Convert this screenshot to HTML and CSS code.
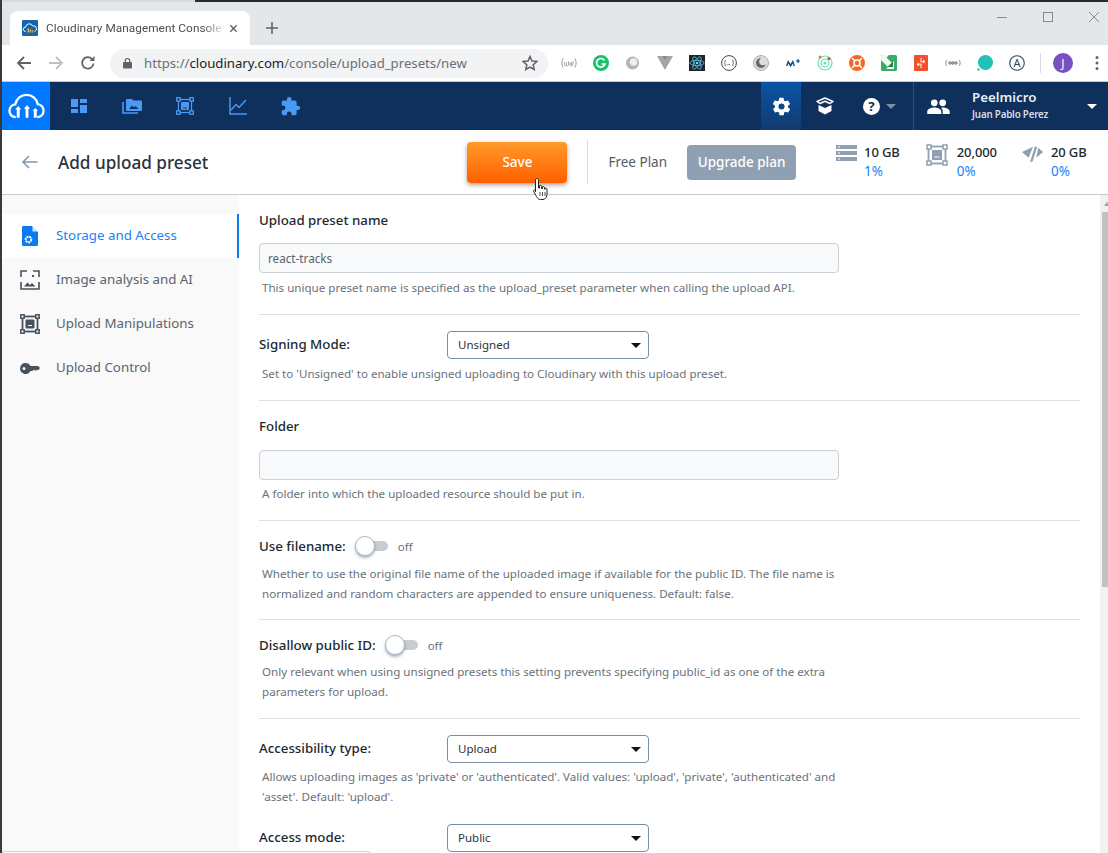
FILE: index.html
```html
<!DOCTYPE html>
<html lang="en">
<head>
<meta charset="utf-8">
<title>Cloudinary Management Console</title>
<link rel="stylesheet" href="styles.css">
</head>
<body>
<div class="window">
  <div class="topline"></div>
  <div class="tabstrip">
    <div class="tab">
      <svg class="favicon" viewBox="0 0 16 16"><rect width="16" height="16" rx="1" fill="#1565a8"/><path d="M3.500 11.500a2.200 2.200 0 0 1 .2-4.400A3.600 3.600 0 0 1 10.600 6a2.800 2.800 0 0 1 2 5.500" fill="none" stroke="#fff" stroke-width="1"/><rect x="5.500" y="8.500" width="1.500" height="4" fill="#f5b342"/><rect x="7.700" y="9.500" width="1.500" height="3" fill="#f5b342"/><rect x="9.900" y="10" width="1.500" height="2.500" fill="#f08a24"/></svg>
      <span class="tab-title">Cloudinary Management Console</span>
      <svg class="tab-close" viewBox="0 0 10 10"><path d="M1.500 1.500l7 7M8.500 1.500l-7 7" stroke="#5f6368" stroke-width="1.500"/></svg>
    </div>
    <svg class="new-tab" viewBox="0 0 12 12"><path d="M6 0v12M0 6h12" stroke="#5f6368" stroke-width="1.600"/></svg>
    <div class="win-controls">
      <svg viewBox="0 0 10 10"><path d="M0 5.500h10" stroke="#8a8d90"/></svg>
      <svg viewBox="0 0 10 10"><rect x=".5" y=".5" width="9" height="9" fill="none" stroke="#8a8d90"/></svg>
      <svg viewBox="0 0 10 10"><path d="M0 0l10 10M10 0L0 10" stroke="#8a8d90"/></svg>
    </div>
  </div>

  <div class="toolbar">
    <svg class="nav-btn" viewBox="0 0 16 16"><path d="M15 8H2.500M8 2L2 8l6 6" fill="none" stroke="#5f6368" stroke-width="1.800"/></svg>
    <svg class="nav-btn" viewBox="0 0 16 16"><path d="M1 8h12.500M8 2l6 6-6 6" fill="none" stroke="#bdc1c6" stroke-width="1.800"/></svg>
    <svg class="nav-btn" viewBox="0 0 16 16"><path d="M13.500 8.500A5.700 5.700 0 1 1 12 4" fill="none" stroke="#5f6368" stroke-width="1.800"/><path d="M14.500 1v5h-5z" fill="#5f6368"/></svg>
    <div class="omnibox">
      <svg class="lock" viewBox="0 0 10 12"><path d="M2.500 5V3.500a2.500 2.500 0 0 1 5 0V5" fill="none" stroke="#5f6368" stroke-width="1.300"/><rect y="5" width="10" height="7" rx="1" fill="#5f6368"/></svg>
      <span class="url"><span class="url-dim">https://</span>cloudinary.com<span class="url-dim">/console/upload_presets/new</span></span>
      <svg class="star" viewBox="0 0 16 16"><path d="M8 1.500l2 4.500 4.800.5-3.600 3.200 1 4.800L8 12.100l-4.200 2.400 1-4.800L1.200 6.500 6 6z" fill="none" stroke="#5f6368" stroke-width="1.500"/></svg>
    </div>
    <div class="extensions">
      <span class="ext"><svg viewBox="0 0 16 16"><path d="M2 3.500C.5 6.500.5 9.500 2 12.500M14 3.500c1.500 3 1.500 6 0 9" fill="none" stroke="#999" stroke-width="1"/><path d="M3.500 7v3c0 1 2 1 2 0V7.500 10c0 1 2 1 2 0V6.500M9 7v3c0 1 1.500 1 1.500 0V7 10c0 1 1.500 1 1.500 0V6" fill="none" stroke="#aaa" stroke-width="1"/></svg></span>
      <span class="ext"><svg viewBox="0 0 16 16"><circle cx="8" cy="8" r="8" fill="#15c26b"/><path d="M11.500 5.500A4.300 4.300 0 1 0 12 9H8.500" fill="none" stroke="#fff" stroke-width="1.700"/></svg></span>
      <span class="ext"><svg viewBox="0 0 16 16"><circle cx="7.500" cy="8" r="6.500" fill="#b5b5b5"/><circle cx="8.500" cy="7" r="3.800" fill="#eee"/></svg></span>
      <span class="ext"><svg viewBox="0 0 16 16"><path d="M0 1h5l3 5 3-5h5L8 15z" fill="#a5a5a5"/><path d="M5 1l3 5 3-5" fill="#8a8a8a"/></svg></span>
      <span class="ext"><svg viewBox="0 0 16 16"><rect width="16" height="16" fill="#20232a"/><circle cx="8" cy="8" r="1.300" fill="#61dafb"/><g fill="none" stroke="#61dafb" stroke-width=".7"><ellipse cx="8" cy="8" rx="7" ry="2.700"/><ellipse cx="8" cy="8" rx="7" ry="2.700" transform="rotate(60 8 8)"/><ellipse cx="8" cy="8" rx="7" ry="2.700" transform="rotate(120 8 8)"/></g></svg></span>
      <span class="ext"><svg viewBox="0 0 16 16"><circle cx="8" cy="8" r="7.400" fill="#fff" stroke="#444" stroke-width="1"/><path d="M5 5c-1 0-1 .8-1 1.500S4 8 3.500 8 4 8.800 4 9.500 4 11 5 11M11 5c1 0 1 .8 1 1.500s0 1.500.5 1.500-.5.800-.5 1.500 0 1.500-1 1.500" fill="none" stroke="#444" stroke-width=".8"/><path d="M6.500 9.500h3" stroke="#555" stroke-dasharray="1 .5"/></svg></span>
      <span class="ext"><svg viewBox="0 0 16 16"><circle cx="8" cy="8" r="7.500" fill="#ddd" stroke="#aaa"/><circle cx="8" cy="8" r="5" fill="#666"/><circle cx="10" cy="6.500" r="3.800" fill="#ddd"/></svg></span>
      <span class="ext"><svg viewBox="0 0 16 16"><path d="M1 11l2-6 2.500 4L8 5l2 6H8.500L8 8.500 5.500 12 3.200 8.500 2.500 11z" fill="#0b4a80"/><path d="M11 6h4M13 4v4" stroke="#0b4a80" stroke-width="1.200"/></svg></span>
      <span class="ext"><svg viewBox="0 0 16 16"><circle cx="8" cy="8" r="7" fill="none" stroke="#67e0b6" stroke-width="1.200"/><circle cx="8" cy="8" r="4" fill="none" stroke="#67e0b6" stroke-width="1.200"/><circle cx="8" cy="8" r="1.500" fill="#67e0b6"/><circle cx="3" cy="2" r="1.500" fill="#f0733a"/><circle cx="12" cy="3.500" r="1.500" fill="#e8392b"/></svg></span>
      <span class="ext"><svg viewBox="0 0 16 16"><circle cx="8" cy="8" r="8" fill="#f26a21"/><circle cx="8" cy="8" r="3" fill="none" stroke="#fff" stroke-width="1.500"/><path d="M3 3l3 3M13 3l-3 3M3 13l3-3M13 13l-3-3" stroke="#fff" stroke-width="1.500"/></svg></span>
      <span class="ext"><svg viewBox="0 0 16 16"><rect width="16" height="16" rx="1.500" fill="#3bab66"/><path d="M0 1.500L1.500 0H8L5.500 2.500 11 8l2-2v8H5l2-2L0 5z" fill="#f0fbf4"/><path d="M12 6.500V12H6.500z" fill="#1f7f47"/></svg></span>
      <span class="ext"><svg viewBox="0 0 16 16"><rect x="1" width="14" height="16" rx="1" fill="#f0512a"/><path d="M8 3v4M8 9v4M8 7l4-.5M8 9l-4 .5M10 5l2 1.500-2 1.500M6 8l-2 1.500 2 1.500" fill="none" stroke="#fff" stroke-width="1"/></svg></span>
      <span class="ext"><svg viewBox="0 0 16 16"><path d="M2 5C.5 6 .5 10 2 11M14 5c1.500 1 1.500 5 0 6" fill="none" stroke="#777" stroke-width=".8"/><circle cx="5" cy="8" r="1.200" fill="none" stroke="#555" stroke-width=".9"/><circle cx="8" cy="8" r="1.200" fill="none" stroke="#555" stroke-width=".9"/><circle cx="11" cy="8" r="1.200" fill="none" stroke="#555" stroke-width=".9"/></svg></span>
      <span class="ext"><svg viewBox="0 0 16 16"><circle cx="8.500" cy="7.500" r="7.500" fill="#1fc2b4"/><circle cx="1.500" cy="14.500" r="1.200" fill="#1fc2b4"/></svg></span>
      <span class="ext"><svg viewBox="0 0 16 16"><circle cx="8" cy="8" r="7.300" fill="#fff" stroke="#33455c" stroke-width="1.100"/><text x="8" y="11.700" text-anchor="middle" class="ext-a">A</text></svg></span>
      <span class="ext-sep"></span>
      <span class="avatar">J</span>
      <svg class="menu-dots" viewBox="0 0 4 16"><circle cx="2" cy="2.500" r="1.500" fill="#5f6368"/><circle cx="2" cy="8" r="1.500" fill="#5f6368"/><circle cx="2" cy="13.500" r="1.500" fill="#5f6368"/></svg>
    </div>
  </div>

  <header class="appbar">
    <div class="logo">
      <svg viewBox="0 0 38 26"><path d="M8 24.500C3.500 24.500 1.500 21 1.500 18c0-3.500 2.500-6.300 6-6.700C8.700 5.500 13.500 1.500 19 1.500c5.700 0 10.300 3.800 11.500 9.500 3.500.5 6 3.500 6 7 0 3.500-2.500 6.500-6.500 6.500" fill="none" stroke="#fff" stroke-width="2.400"/><path d="M10.500 13l3 3.500h-1.500V25H9v-8.500H7.500zM19.500 12l3.200 3.700H21V25h-3v-9.300h-1.700zM28 15l2.800 3H29.500v7h-3v-7h-1.300z" fill="#fff"/></svg>
    </div>
    <nav class="appnav">
      <a class="appnav-item"><svg viewBox="0 0 16 16"><path d="M0 1h7v8H0zM0 11h7v4H0zM9 1h7v4H9zM9 7h7v8H9z" fill="#4a9af5"/></svg></a>
      <a class="appnav-item"><svg viewBox="0 0 20 18"><path d="M1 5v11h15" fill="none" stroke="#4a9af5" stroke-width="1.600"/><path d="M4 3a1 1 0 0 1 1-1h5l1.500 1.500H19a1 1 0 0 1 1 1V13a1 1 0 0 1-1 1H5a1 1 0 0 1-1-1z" fill="#4a9af5"/><path d="M7 12l3-3.500 2 2 1.500-1.500 3 3z" fill="#0f2f5c"/></svg></a>
      <a class="appnav-item"><svg viewBox="0 0 18 18"><rect x="2.500" y="2.500" width="13" height="13" fill="none" stroke="#4a9af5" stroke-width="1.300"/><rect x=".7" y=".7" width="3.400" height="3.400" fill="#0f2f5c" stroke="#4a9af5" stroke-width="1.300"/><rect x="13.900" y=".7" width="3.400" height="3.400" fill="#0f2f5c" stroke="#4a9af5" stroke-width="1.300"/><rect x=".7" y="13.900" width="3.400" height="3.400" fill="#0f2f5c" stroke="#4a9af5" stroke-width="1.300"/><rect x="13.900" y="13.900" width="3.400" height="3.400" fill="#0f2f5c" stroke="#4a9af5" stroke-width="1.300"/><rect x="5" y="5" width="8" height="8" rx="1" fill="#4a9af5"/><path d="M7 11h4" stroke="#0f2f5c"/></svg></a>
      <a class="appnav-item"><svg viewBox="0 0 18 18"><path d="M1 0v17h17" fill="none" stroke="#4a9af5" stroke-width="1.500"/><path d="M2 13l5-5.500 3 3L17 3" fill="none" stroke="#4a9af5" stroke-width="1.500"/></svg></a>
      <a class="appnav-item"><svg viewBox="0 0 24 24"><path d="M20.500 11H19V7a2 2 0 0 0-2-2h-4V3.500a2.500 2.500 0 0 0-5 0V5H4a2 2 0 0 0-2 2v3.800h1.500a2.700 2.700 0 0 1 0 5.400H2V20a2 2 0 0 0 2 2h3.800v-1.500a2.700 2.700 0 0 1 5.400 0V22H17a2 2 0 0 0 2-2v-4h1.500a2.500 2.500 0 0 0 0-5z" fill="#4a9af5"/></svg></a>
    </nav>
    <div class="app-actions">
      <a class="action action-active"><svg viewBox="0 0 24 24"><path fill="#fff" d="M19.400 13a7.500 7.500 0 0 0 0-2l2.100-1.600a.5.500 0 0 0 .1-.6l-2-3.500a.5.500 0 0 0-.6-.2l-2.500 1a7.300 7.300 0 0 0-1.700-1l-.4-2.700a.5.500 0 0 0-.5-.4h-4a.5.500 0 0 0-.5.400l-.4 2.700a7.300 7.300 0 0 0-1.700 1l-2.500-1a.5.500 0 0 0-.6.2l-2 3.500a.5.500 0 0 0 .1.600L4.600 11a7.500 7.500 0 0 0 0 2l-2.100 1.600a.5.500 0 0 0-.1.600l2 3.500c.1.200.4.300.6.200l2.500-1a7.300 7.300 0 0 0 1.700 1l.4 2.700c0 .2.300.4.500.4h4c.2 0 .5-.2.500-.4l.4-2.700a7.300 7.300 0 0 0 1.700-1l2.500 1c.2.100.5 0 .6-.2l2-3.500a.5.500 0 0 0-.1-.6zM12 15.500a3.500 3.500 0 1 1 0-7 3.500 3.500 0 0 1 0 7z"/></svg></a>
      <a class="action action-box"><svg viewBox="0 0 18 18"><path d="M9 1l8 3.500-3 2L9 4.300 4 6.500l-3-2z" fill="none" stroke="#fff" stroke-width="1.500" stroke-linejoin="round"/><path d="M2.500 8L9 11l6.500-3v6L9 17.500 2.500 14z" fill="#fff"/></svg></a>
      <a class="action action-help"><svg class="help-icon" viewBox="0 0 18 18"><circle cx="9" cy="9" r="9" fill="#fff"/><text x="9" y="14" text-anchor="middle" class="help-q">?</text></svg><span class="help-caret"></span></a>
    </div>
    <div class="account">
      <svg class="people" viewBox="0 0 24 16"><circle cx="7.500" cy="4" r="3.600" fill="#fff"/><circle cx="16.500" cy="4" r="3.600" fill="#fff"/><path d="M0 16v-2.500C0 10.500 4.500 9 7.500 9s7.500 1.500 7.500 4.500V16zM16.500 9c3 0 7.500 1.500 7.500 4.500V16h-7.500v-3c0-1.500-.8-2.800-2-3.500.7-.3 1.400-.5 2-.5z" fill="#fff"/></svg>
      <div class="account-names">
        <div class="account-cloud">Peelmicro</div>
        <div class="account-user">Juan Pablo Perez</div>
      </div>
      <span class="account-caret"></span>
    </div>
  </header>

  <div class="subheader">
    <svg class="back" viewBox="0 0 16 14"><path d="M16 7H1.500M7.500 1l-6 6 6 6" fill="none" stroke="#8296ad" stroke-width="1.500"/></svg>
    <h1 class="page-title">Add upload preset</h1>
    <div class="sub-right">
      <button class="save-btn">Save</button>
      <span class="sub-sep"></span>
      <span class="plan">Free Plan</span>
      <button class="upgrade-btn">Upgrade plan</button>
      <div class="stat stat-first">
        <svg class="stat-icon" viewBox="0 0 21 16"><path d="M0 0h21v4H0zM0 6h21v4H0zM0 12h21v4H0z" fill="#8fa0b3"/><path d="M2 2h2M2 8h2M2 14h2" stroke="#fff"/></svg>
        <div class="stat-text"><div class="stat-val">10 GB</div><div class="stat-pct">1%</div></div>
      </div>
      <div class="stat stat-second">
        <svg class="stat-icon" viewBox="0 0 22 22"><rect x="2.500" y="2.500" width="17" height="17" fill="none" stroke="#8fa0b3" stroke-width="1.800"/><rect x="1" y="1" width="4" height="4" fill="#fff" stroke="#8fa0b3" stroke-width="1.500"/><rect x="17" y="1" width="4" height="4" fill="#fff" stroke="#8fa0b3" stroke-width="1.500"/><rect x="1" y="17" width="4" height="4" fill="#fff" stroke="#8fa0b3" stroke-width="1.500"/><rect x="17" y="17" width="4" height="4" fill="#fff" stroke="#8fa0b3" stroke-width="1.500"/><rect x="6" y="6" width="10" height="10" fill="#8fa0b3"/><path d="M8.500 13h5" stroke="#fff"/></svg>
        <div class="stat-text"><div class="stat-val">20,000</div><div class="stat-pct">0%</div></div>
      </div>
      <div class="stat stat-third">
        <svg class="stat-icon" viewBox="0 0 22 16"><path d="M0 6L11.500 .5 7 12zM13.500 .5h2.500L11 16H8.500zM17 1.500l5 4.500-7 6z" fill="#8fa0b3"/></svg>
        <div class="stat-text"><div class="stat-val">20 GB</div><div class="stat-pct">0%</div></div>
      </div>
    </div>
  </div>

  <div class="body">
    <aside class="sidebar">
      <a class="side-item side-active">
        <svg class="side-icon" viewBox="0 0 16 20"><path d="M1 0h9l6 6v13a1 1 0 0 1-1 1H1a1 1 0 0 1-1-1V1a1 1 0 0 1 1-1z" fill="#0a7bf0"/><path d="M10.500 0v5.500H16z" fill="#d5e8fc"/><circle cx="6.500" cy="13.500" r="2.800" fill="none" stroke="#fff" stroke-width="2" stroke-dasharray="2 .7"/></svg>
        <span>Storage and Access</span>
      </a>
      <a class="side-item">
        <svg class="side-icon" viewBox="0 0 20 20"><path d="M1 7V1h6M13 1h6v6M19 12v7H1v-7" fill="none" stroke="#48525e" stroke-width="1.600"/><path d="M4 16.500l3.500-4 2.500 2.500 2-2 3.500 3.500z" fill="#48525e"/><rect x="12" y="5" width="2" height="2" fill="#48525e"/></svg>
        <span>Image analysis and AI</span>
      </a>
      <a class="side-item">
        <svg class="side-icon" viewBox="0 0 20 20"><rect x="2.500" y="2.500" width="15" height="15" fill="none" stroke="#48525e" stroke-width="1.800"/><rect x=".8" y=".8" width="3.400" height="3.400" fill="#f9f9f9" stroke="#48525e" stroke-width="1.500"/><rect x="15.800" y=".8" width="3.400" height="3.400" fill="#f9f9f9" stroke="#48525e" stroke-width="1.500"/><rect x=".8" y="15.800" width="3.400" height="3.400" fill="#f9f9f9" stroke="#48525e" stroke-width="1.500"/><rect x="15.800" y="15.800" width="3.400" height="3.400" fill="#f9f9f9" stroke="#48525e" stroke-width="1.500"/><rect x="5.500" y="5.500" width="9" height="9" rx="1" fill="#48525e"/><path d="M8 11.500h4" stroke="#f9f9f9"/></svg>
        <span>Upload Manipulations</span>
      </a>
      <a class="side-item">
        <svg class="side-icon side-key" viewBox="0 0 20 11"><path d="M5.500 0a5.500 5.500 0 1 0 5 8h2l1.500-1.500L15.500 8 17 6.500 18 7.500 20 5 18 3h-7.500a5.500 5.500 0 0 0-5-3zM4 4a1.500 1.500 0 1 1 0 3 1.500 1.500 0 0 1 0-3z" fill="#48525e"/></svg>
        <span>Upload Control</span>
      </a>
    </aside>

    <main class="main">
      <section class="sec sec-name">
        <label class="lbl lbl-block">Upload preset name</label>
        <input class="txt txt-name" type="text" value="react-tracks">
        <p class="help help-one">This unique preset name is specified as the upload_preset parameter when calling the upload API.</p>
      </section>
      <section class="sec sec-sign">
        <div class="row">
          <label class="lbl lbl-fixed">Signing Mode:</label>
          <div class="sel"><span>Unsigned</span><i class="sel-caret"></i></div>
        </div>
        <p class="help help-one">Set to 'Unsigned' to enable unsigned uploading to Cloudinary with this upload preset.</p>
      </section>
      <section class="sec sec-folder">
        <label class="lbl lbl-block">Folder</label>
        <input class="txt txt-folder" type="text">
        <p class="help help-folder">A folder into which the uploaded resource should be put in.</p>
      </section>
      <section class="sec sec-file">
        <div class="row-toggle">
          <label class="lbl">Use filename:</label>
          <span class="toggle"><i class="knob"></i></span>
          <span class="off">off</span>
        </div>
        <p class="help help-two">Whether to use the original file name of the uploaded image if available for the public ID. The file name is normalized and random characters are appended to ensure uniqueness. Default: false.</p>
      </section>
      <section class="sec sec-public">
        <div class="row-toggle">
          <label class="lbl">Disallow public ID:</label>
          <span class="toggle"><i class="knob"></i></span>
          <span class="off">off</span>
        </div>
        <p class="help help-two help-public">Only relevant when using unsigned presets this setting prevents specifying public_id as one of the extra parameters for upload.</p>
      </section>
      <section class="sec sec-access">
        <div class="row">
          <label class="lbl lbl-fixed">Accessibility type:</label>
          <div class="sel"><span>Upload</span><i class="sel-caret"></i></div>
        </div>
        <p class="help help-access">Allows uploading images as 'private' or 'authenticated'. Valid values: 'upload', 'private', 'authenticated' and 'asset'. Default: 'upload'.</p>
        <div class="row row-mode">
          <label class="lbl lbl-fixed">Access mode:</label>
          <div class="sel"><span>Public</span><i class="sel-caret"></i></div>
        </div>
      </section>
    </main>
    <div class="scrollbar">
      <i class="scroll-up"></i>
      <i class="scroll-thumb"></i>
    </div>
  </div>

  <div class="status-bubble"></div>
  <svg class="cursor" viewBox="0 0 16 24"><path d="M4.500 1.500c1 0 1.500.7 1.500 1.500v8l1 .2V8.500c1.400-.6 2 0 2 1v2l1 .2v-2c1.400-.5 2 .2 2 1v1.300l.8.200v-1c1.200-.3 1.700.3 1.700 1.300V17c0 2.500-1.500 5.500-4 5.500H8c-2 0-3-1.200-4-3l-2.800-5c-.5-1.200.6-2.200 1.800-1.200L3 15V3c0-.8.600-1.500 1.500-1.500z" fill="#fff" stroke="#222" stroke-width="1"/><path d="M7.500 15v4M10 15v4M12.500 15v4" stroke="#222" stroke-width=".8"/></svg>
</div>
</body>
</html>
```
FILE: styles.css
```css
* { box-sizing: border-box; }
html, body { margin: 0; padding: 0; height: 100%; overflow: hidden; background: #fff; }
body { font-family: "Noto Sans", "Open Sans", sans-serif; color: #22282e; }
svg { display: block; flex: none; }
a { display: flex; }
p, h1 { margin: 0; }

.window { position: relative; width: 1108px; height: 853px; overflow: hidden; border-left: 2px solid #3a3a3a; display: flex; flex-direction: column; }
.topline { height: 2px; flex: none; background: linear-gradient(90deg, #d6d9dc 193px, #2b2b2b 193px); }

/* Browser chrome */
.tabstrip { height: 43px; flex: none; background: #e4e7ea; display: flex; align-items: flex-end; padding-left: 8px; }
.tab { width: 240px; height: 34px; background: #fff; border-radius: 8px 8px 0 0; display: flex; align-items: center; padding: 0 12px; }
.favicon { width: 16px; height: 16px; margin-right: 8px; }
.tab-title { flex: 1; min-width: 0; white-space: nowrap; font-family: Roboto, "Noto Sans", sans-serif; font-size: 11.800px; letter-spacing: .05px; color: #4a4f55; -webkit-mask-image: linear-gradient(90deg, #000 90%, rgba(0, 0, 0, .2)); mask-image: linear-gradient(90deg, #000 90%, rgba(0, 0, 0, .2)); }
.tab-close { width: 9px; height: 9px; margin-left: 8px; }
.new-tab { width: 12px; height: 12px; margin: 0 0 11px 16px; }
.win-controls { margin-left: auto; align-self: flex-start; display: flex; gap: 36px; padding: 10px 9px 0 0; }
.win-controls svg { width: 10px; height: 10px; }

.toolbar { height: 37px; flex: none; background: #fff; border-bottom: 1px solid #c9cccf; display: flex; align-items: center; padding-left: 14px; }
.nav-btn { width: 16px; height: 16px; margin-right: 16px; }
.nav-btn:nth-child(3) { margin-right: 14px; }
.omnibox { width: 438px; height: 29px; border-radius: 15px; background: #f1f3f4; display: flex; align-items: center; padding: 0 10px 0 13px; }
.lock { width: 9px; height: 12px; margin-right: 12px; }
.url { font-size: 13.200px; color: #202124; white-space: nowrap; flex: 1; }
.url-dim { color: #6a6f75; }
.star { width: 16px; height: 16px; }
.extensions { display: flex; align-items: center; margin-left: 5px; }
.ext { width: 32px; height: 16px; display: flex; justify-content: center; }
.ext svg { width: 16px; height: 16px; }
.ext-a { font: 11px "Noto Sans", sans-serif; fill: #33455c; }
.ext-sep { width: 1px; height: 20px; background: #dadce0; margin: 0 12px 0 7px; }
.avatar { width: 20px; height: 20px; border-radius: 50%; background: #7a4fc0; color: #fff; font-size: 12px; display: flex; align-items: center; justify-content: center; }
.menu-dots { width: 4px; height: 16px; margin-left: 22px; }

/* App bar */
.appbar { height: 48px; flex: none; background: #0f2f5c; display: flex; align-items: stretch; }
.logo { width: 48px; background: #0078ff; display: flex; align-items: center; justify-content: center; }
.logo svg { width: 37px; height: 26px; }
.appnav { display: flex; padding-left: 2px; }
.appnav-item { width: 53px; align-items: center; justify-content: center; }
.appnav-item svg { width: 18px; height: 18px; }
.appnav-item:first-child svg { width: 16px; height: 16px; }
.appnav-item:nth-child(2) svg { width: 20px; height: 18px; }
.appnav-item:last-child svg { width: 21px; height: 21px; }
.app-actions { display: flex; margin-left: auto; }
.action { align-items: center; justify-content: center; }
.action-active { width: 40px; background: linear-gradient(#0a54a8, #123a6c); }
.action-active svg { width: 21px; height: 21px; }
.action-box { width: 48px; }
.action-box svg { width: 18px; height: 18px; }
.action-help { width: 64px; gap: 3px; justify-content: flex-start; padding-left: 14px; }
.help-icon { width: 17px; height: 17px; }
.help-q { font: bold 14px "Noto Sans", sans-serif; fill: #0f2f5c; }
.help-caret { width: 0; height: 0; border: 5px solid transparent; border-top: 5px solid #7f8da0; border-bottom: 0; margin-left: 3px; }
.account { width: 195px; border-left: 1px solid #34507a; display: flex; align-items: center; padding-left: 13px; position: relative; }
.people { width: 23px; height: 15px; margin-right: 22px; }
.account-names { color: #fff; }
.account-cloud { font-size: 13.300px; font-weight: 600; line-height: 18px; color: #e8edf3; }
.account-user { font-size: 9.800px; font-weight: 600; letter-spacing: -.2px; line-height: 18px; color: #d6dde6; }
.account-caret { width: 0; height: 0; border: 5px solid transparent; border-top: 5px solid #fff; border-bottom: 0; margin-left: auto; margin-right: 11px; }

/* Sub header */
.subheader { height: 65px; flex: none; background: #fff; border-bottom: 1px solid #c8cccf; display: flex; align-items: center; padding-left: 19px; }
.back { width: 17px; height: 14px; margin-right: 20px; }
.page-title { font-size: 17.150px; font-weight: 500; color: #2c333a; white-space: nowrap; }
.sub-right { display: flex; align-items: center; margin-left: 259px; flex: 1; }
.save-btn { width: 100px; height: 41px; border: 0; border-radius: 4px; background: linear-gradient(#ff9b2b, #ff5f00); box-shadow: 0 2px 4px rgba(80, 40, 0, .45); color: #fff; font: 500 13.500px "Noto Sans", sans-serif; }
.sub-sep { width: 1px; height: 44px; background: #d9dcdf; margin: 0 20px; }
.plan { font-size: 13.500px; color: #555c64; white-space: nowrap; }
.upgrade-btn { width: 109px; height: 35px; margin-left: 20px; border: 0; border-radius: 4px; background: #8fa0b3; color: #fff; font: 500 13.500px "Noto Sans", sans-serif; }
.stat { display: flex; align-items: flex-start; }
.stat-first { margin-left: 40px; }
.stat-first .stat-icon { width: 21px; height: 16px; margin: 2px 7px 0 0; }
.stat-second { margin-left: 26px; }
.stat-second .stat-icon { width: 22px; height: 22px; margin: 1px 9px 0 0; }
.stat-third { margin-left: 25px; }
.stat-third .stat-icon { width: 21px; height: 16px; margin: 3px 8px 0 0; }
.stat-val { font-size: 13px; letter-spacing: -.1px; color: #23282d; line-height: 19px; font-weight: 500; white-space: nowrap; }
.stat-pct { font-size: 13.500px; color: #1a82f7; line-height: 19px; }

/* Body */
.body { flex: 1; display: flex; min-height: 0; }
.sidebar { width: 237px; flex: none; background: #f9f9f9; padding-top: 19px; }
.side-item { height: 44px; align-items: center; padding-left: 18px; font-size: 13.300px; color: #5a636d; white-space: nowrap; }
.side-item span { margin: 0 0 2px 16px; }
.side-active { background: #fff; color: #1a82f7; border-right: 2px solid #0a7bf0; padding-left: 20px; }
.side-active span { margin-left: 18px; }
.side-icon { width: 20px; height: 20px; }
.side-active .side-icon { width: 16px; height: 20px; }
.side-key { height: 11px; }

.main { flex: 1; min-width: 0; padding: 0 20px; overflow: hidden; }
.sec { border-bottom: 1px solid #dfe2e5; }
.lbl { font-size: 13.300px; line-height: 20px; font-weight: 500; color: #22282e; white-space: nowrap; }
.lbl-block { display: block; }
.lbl-fixed { width: 188px; flex: none; margin-bottom: 2px; }
.help { font-size: 11.600px; line-height: 20px; color: #6a727a; padding-left: 3px; max-width: 580px; }
.txt { display: block; width: 580px; height: 30px; padding: 0 8px; border: 1px solid #c8d0d8; border-radius: 4px; background: #f8f9fa; font: 11.700px "Noto Sans", sans-serif; color: #5a636d; }
.sel { width: 202px; height: 28px; padding: 0 10px; border: 1px solid #7b8ea5; border-radius: 4px; background: #fff; display: flex; align-items: center; justify-content: space-between; font-size: 11.500px; color: #2c333a; }
.sel span { margin-bottom: 2px; }
.sel-caret { width: 0; height: 0; border: 5px solid transparent; border-top: 5px solid #111; border-bottom: 0; margin-right: -3px; }
.row { display: flex; align-items: center; }
.row-toggle { display: flex; align-items: center; }
.toggle { position: relative; width: 32px; height: 10px; margin-left: 10px; border-radius: 5px; background: #c9cdd2; }
.knob { position: absolute; left: -1px; top: -5px; width: 20px; height: 20px; border-radius: 50%; background: #fff; border: 1px solid #a8b8cc; box-shadow: 0 2px 3px rgba(60, 80, 110, .45); }
.off { font-size: 11.500px; color: #6a727a; margin-left: 10px; }

.sec-name { padding: 15px 0 16px; }
.txt-name { margin-top: 13px; }
.help-one { margin-top: 5px; }
.sec-sign { padding: 16px 0 16px; }
.sec-folder { padding: 15px 0 16px; }
.txt-folder { margin-top: 14px; }
.help-folder { margin-top: 4px; }
.sec-file { padding: 15px 0 16px; }
.help-two { margin-top: 8px; line-height: 19.500px; }
.sec-public { padding: 15px 0 17px; }
.help-public { margin-top: 7px; }
.sec-access { padding: 16px 0 0; border-bottom: 0; }
.help-access { margin-top: 4px; }
.row-mode { margin-top: 17px; }

.scrollbar { width: 8px; flex: none; background: #f1f1f1; position: relative; padding: 17px 0 0 2px; }
.scroll-up { position: absolute; top: 7px; left: 4px; width: 0; height: 0; border: 3px solid transparent; border-bottom: 4px solid #a3a3a3; border-top: 0; }
.scroll-thumb { display: block; height: 375px; background: #c1c1c1; }

.status-bubble { position: absolute; left: 0; bottom: -22px; width: 370px; height: 24px; background: #fff; border: 1px solid #d0d0d0; border-radius: 0 4px 0 0; }
.cursor { position: absolute; left: 530px; top: 177px; width: 17px; height: 24px; }
```
